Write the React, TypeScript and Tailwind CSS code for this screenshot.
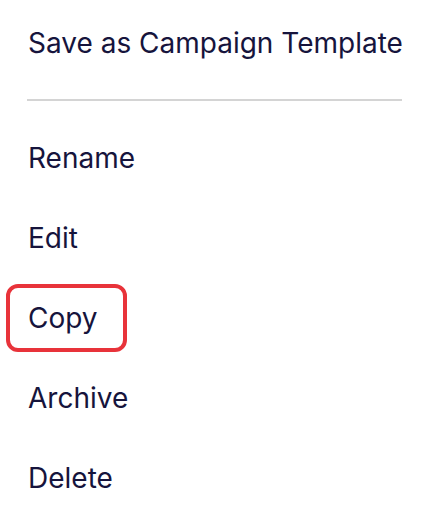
const ITEMS = ["Rename", "Edit", "Copy", "Archive", "Delete"];

export default function App() {
  return (
    <div className="min-h-[524px] w-[426px] bg-white pl-[27px] pr-[24px] pt-[3px] font-['Inter',sans-serif] text-[28px] text-[#16143c]">
      <div className="flex h-[80px] items-center whitespace-nowrap pl-[1px]">Save as Campaign Template</div>
      <div className="mt-[16px] h-[2px] bg-[#d4d4d4]" />
      <ul className="mt-[17px] flex flex-col">
        {ITEMS.map((label) => (
          <li key={label} className="flex h-[80px] items-center pl-[1px]">
            {label === "Copy" ? (
              <span className="-ml-[22px] flex h-[68px] items-center rounded-[12px] border-4 border-[#e8333a] pl-[18px] pr-[25px]">
                {label}
              </span>
            ) : (
              label
            )}
          </li>
        ))}
      </ul>
    </div>
  );
}
